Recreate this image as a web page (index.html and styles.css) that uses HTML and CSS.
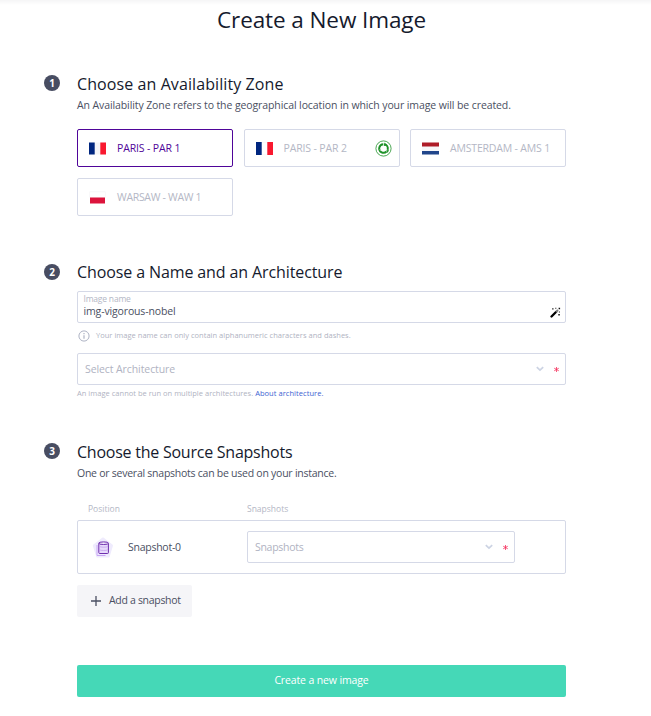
FILE: index.html
```
<!DOCTYPE html>
<html lang="en">
<head>
<meta charset="utf-8">
<title>Create a New Image</title>
<link rel="stylesheet" href="styles.css">
</head>
<body>
<main class="page">
  <h1 class="title">Create a New Image</h1>

  <section class="step step-zone">
    <span class="badge">1</span>
    <div class="content">
      <h2 class="heading heading-zone">Choose an Availability Zone</h2>
      <p class="sub">An Availability Zone refers to the geographical location in which your image will be created.</p>
      <div class="zones">
        <div class="zone selected">
          <svg class="flag" viewBox="0 0 17 13"><path fill="#f5f5f7" d="M0 .5h17v12H0z"/><path fill="#00267f" d="M0 .5h5.7v12H0z"/><path fill="#f9182f" d="M11.3.5H17v12h-5.7z"/></svg>
          <span class="zone-name par">PARIS - PAR 1</span>
        </div>
        <div class="zone">
          <svg class="flag" viewBox="0 0 17 13"><path fill="#f5f5f7" d="M0 0h17v13H0z"/><path fill="#fff" d="M6 .5h5v12H6z"/><path fill="#00267f" d="M0 0h5.7v13H0z"/><path fill="#f9182f" d="M11.3 0H17v13h-5.7z"/></svg>
          <span class="zone-name par">PARIS - PAR 2</span>
          <svg class="eco" viewBox="0 0 17 17" fill="none" stroke="#1e9128"><circle cx="8.5" cy="8.5" r="7.6" stroke-width=".8"/><circle cx="8.5" cy="8.5" r="4.3" stroke-width="2" stroke-dasharray="7.2 1.8" transform="rotate(-78 8.5 8.5)"/><path fill="#1e9128" stroke="none" d="M9.6 2.6l2.2 2.7-3 .7zM3 9.2l2.8.4-1.2 2.8zM11.2 10.3l2.7-.2-1.1 3z"/></svg>
        </div>
        <div class="zone">
          <svg class="flag" viewBox="0 0 17 13"><path fill="#f7f7f9" d="M0 .5h17v12H0z"/><path fill="#ae1c28" d="M0 .5h17v4H0z"/><path fill="#21468b" d="M0 9h17v3.5H0z"/></svg>
          <span class="zone-name ams">AMSTERDAM - AMS 1</span>
        </div>
        <div class="zone">
          <svg class="flag" viewBox="0 0 17 13"><path fill="#f2f2f4" d="M.5.5h16v6H.5z"/><path fill="#fff" d="M1 1.2h15v5.3H1z"/><path fill="#dc143c" d="M1 6.5h15v6H1z"/></svg>
          <span class="zone-name waw">WARSAW - WAW 1</span>
        </div>
      </div>
    </div>
  </section>

  <section class="step step-name">
    <span class="badge badge-low">2</span>
    <div class="content">
      <h2 class="heading heading-name">Choose a Name and an Architecture</h2>
      <div class="field name-field">
        <div class="field-text">
          <label class="label">Image name</label>
          <span class="value">img-vigorous-nobel</span>
        </div>
        <svg class="wand" viewBox="0 0 11 11"><path d="M1.5 9.500L6 5" stroke="#000" stroke-width="2.300" stroke-linecap="round"/><path d="M6 5l2-2" stroke="#777" stroke-width="2"/><path fill="#111" d="M2.200 1.200h1.300v1.300H2.200zM5.300.8h1v1h-1zM8.600.8h1.500v1.500H8.600zM8.900 4.600h1v1h-1zM8.300 7h1.500v1.500H8.300z"/></svg>
      </div>
      <div class="info">
        <svg class="info-icon" viewBox="0 0 12 12" fill="none" stroke="#aeb3c4"><circle cx="6" cy="6" r="5.1" stroke-width="1"/><path d="M6 5.3v3.4M6 3.1v1.2" stroke-width="1.2"/></svg>
        <span class="hint">Your image name can only contain alphanumeric characters and dashes.</span>
      </div>
      <div class="field select">
        <span class="placeholder arch">Select Architecture</span>
        <svg class="chevron" viewBox="0 0 8 6"><path d="M.8 1.2L4 4.2l3.2-3" fill="none" stroke="#ccd3e3" stroke-width="1.7"/></svg>
        <svg class="required" viewBox="0 0 5 5"><path d="M2.500 0v5M.2 1.200l4.600 2.600M4.800 1.200L.2 3.800" stroke="#f5315d" stroke-width=".8"/></svg>
      </div>
      <p class="hint arch-hint">An image cannot be run on multiple architectures. <a class="link">About architecture.</a></p>
    </div>
  </section>

  <section class="step step-source">
    <span class="badge">3</span>
    <div class="content">
      <h2 class="heading heading-source">Choose the Source Snapshots</h2>
      <p class="sub sub-source">One or several snapshots can be used on your instance.</p>
      <div class="columns"><span>Position</span><span>Snapshots</span></div>
      <div class="row">
        <div class="snapshot">
          <svg class="snapshot-icon" viewBox="0 0 22 21"><path d="M11 1.200l9.200 7.200-3.300 11.200H5L1.600 8.400z" fill="#efebfd" stroke="#efebfd" stroke-width="1.600" stroke-linejoin="round"/><path d="M5 8v10.500h8.500" fill="none" stroke="#c8a6f5"/><path d="M6.800 6.200v9.500q0 .8.800.8h8q.8 0 .8-.8V6.200" fill="#e6d9fb" stroke="#6e2dad"/><ellipse cx="11.600" cy="6.200" rx="4.800" ry="1.300" fill="#f2eafd" stroke="#6e2dad"/><path d="M7.500 9.500c1 .9 7.300.9 8.300 0M7.500 12.800c1 .9 7.300.9 8.300 0" fill="none" stroke="#c3a1ec" stroke-width=".8"/></svg>
          <span class="snapshot-name">Snapshot-0</span>
        </div>
        <div class="field select inner">
          <span class="placeholder snap">Snapshots</span>
          <svg class="chevron" viewBox="0 0 8 6"><path d="M.8 1.2L4 4.2l3.2-3" fill="none" stroke="#ccd3e3" stroke-width="1.7"/></svg>
          <svg class="required" viewBox="0 0 5 5"><path d="M2.500 0v5M.2 1.200l4.600 2.600M4.800 1.200L.2 3.800" stroke="#f5315d" stroke-width=".8"/></svg>
        </div>
      </div>
      <button class="add"><svg class="plus" viewBox="0 0 10 10"><path d="M5 0v10M0 5h10" stroke="#4a4f62" stroke-width="1.3"/></svg><span>Add a snapshot</span></button>
      <button class="submit">Create a new image</button>
    </div>
  </section>
</main>
</body>
</html>
```
FILE: styles.css
```
* { box-sizing: border-box; }
body {
  margin: 0;
  background: #fff;
  color: #4a4f62;
  font: 10.5px/14px "Open Sans", "Noto Sans", sans-serif;
}
h1, h2, p { margin: 0; font-weight: 400; }
svg { display: block; flex: none; }
.page {
  height: 716px;
  padding: 5px 85px 0 44px;
  background: linear-gradient(#f5f5f6, #fff 5px) no-repeat;
}
.title {
  height: 30px;
  margin-left: 33px;
  text-align: center;
  color: #151a2d;
  font-size: 22.5px;
  line-height: 30px;
  letter-spacing: -.09px;
}
.step { display: grid; grid-template-columns: 33px 489px; }
.step-zone { margin-top: 37px; }
.step-name { margin-top: 44px; }
.step-source { margin-top: 41px; }
.badge {
  width: 16px;
  height: 16px;
  margin-top: 3px;
  border-radius: 50%;
  background: #484d62;
  color: #fff;
  font-size: 10px;
  font-weight: 700;
  line-height: 16px;
  text-align: center;
}
.badge-low { margin-top: 4px; }
.heading { height: 24px; color: #151a2d; font-size: 16px; line-height: 24px; }
.heading-zone { letter-spacing: .09px; }
.heading-name { letter-spacing: -.11px; }
.heading-source { letter-spacing: -.24px; }
.sub { margin-top: 2px; letter-spacing: -.1px; white-space: nowrap; }
.sub-source { letter-spacing: -.25px; }

.zones {
  display: grid;
  grid-template-columns: repeat(3, 156px);
  grid-auto-rows: 38px;
  gap: 11px 10.5px;
  margin-top: 17px;
}
.zone {
  display: flex;
  align-items: center;
  padding-left: 11px;
  border: 1px solid #d5d9e7;
  border-radius: 2px;
  color: #b4b7c5;
}
.zone.selected { border-color: #4f0599; color: #4f0599; }
.flag { width: 17px; height: 13px; margin-right: 11px; }
.zone-name { white-space: nowrap; }
.par { letter-spacing: -.14px; }
.ams { letter-spacing: -.18px; }
.waw { letter-spacing: -.3px; }
.eco { width: 17px; height: 17px; margin: 0 6.5px 0 auto; }

.field {
  display: flex;
  height: 32px;
  border: 1px solid #d5d9e7;
  border-radius: 2px;
}
.name-field { justify-content: space-between; margin-top: 7px; padding: 0 4px 0 5.5px; }
.field-text { display: flex; flex-direction: column; padding-top: 1px; }
.label { height: 11px; color: #b4b7c5; font-size: 8.5px; line-height: 12px; letter-spacing: -.2px; }
.value { letter-spacing: -.14px; }
.wand { width: 11px; height: 11px; margin-top: 15px; }
.info { display: flex; align-items: center; height: 12px; margin: 7px 0 11px 1px; }
.info-icon { width: 12px; height: 12px; margin-right: 6px; }
.hint { color: #b0b3c2; font-size: 7.5px; line-height: 12px; letter-spacing: .02px; white-space: nowrap; }
.info .hint { height: 14px; }
.arch-hint { margin-top: 2px; }
.link { color: #3d63d2; letter-spacing: .05px; }
.select { align-items: center; padding: 0 6px 0 7px; }
.placeholder { color: #b0b3c2; }
.arch { letter-spacing: -.09px; }
.snap { letter-spacing: -.29px; }
.chevron { width: 8px; height: 6px; margin: 0 10px 0 auto; }
.required { width: 5px; height: 5px; }

.columns {
  display: grid;
  grid-template-columns: 159px auto;
  margin: 22px 0 4px 11px;
  color: #b4b7c5;
  font-size: 8.5px;
}
.row {
  display: grid;
  grid-template-columns: 155px 268px;
  align-items: center;
  height: 54px;
  padding-left: 14px;
  border: 1px solid #d5d9e7;
  border-radius: 2px;
}
.snapshot { display: flex; align-items: center; letter-spacing: -.26px; }
.snapshot-icon { width: 22px; height: 21px; margin-right: 14px; }
button { border: 0; border-radius: 2px; font: inherit; }
.add {
  display: flex;
  align-items: center;
  width: 115px;
  height: 32px;
  margin-top: 11px;
  padding: 0 0 0 14px;
  background: #f5f5f8;
  color: #4a4f62;
  font-weight: 500;
  letter-spacing: -.31px;
}
.add span { padding-bottom: 2px; }
.plus { width: 10px; height: 10px; margin-right: 8px; }
.submit {
  display: block;
  width: 489px;
  height: 32px;
  margin-top: 48px;
  padding: 0 0 2px;
  background: #45d8b7;
  color: #fff;
  letter-spacing: -.13px;
}
```
